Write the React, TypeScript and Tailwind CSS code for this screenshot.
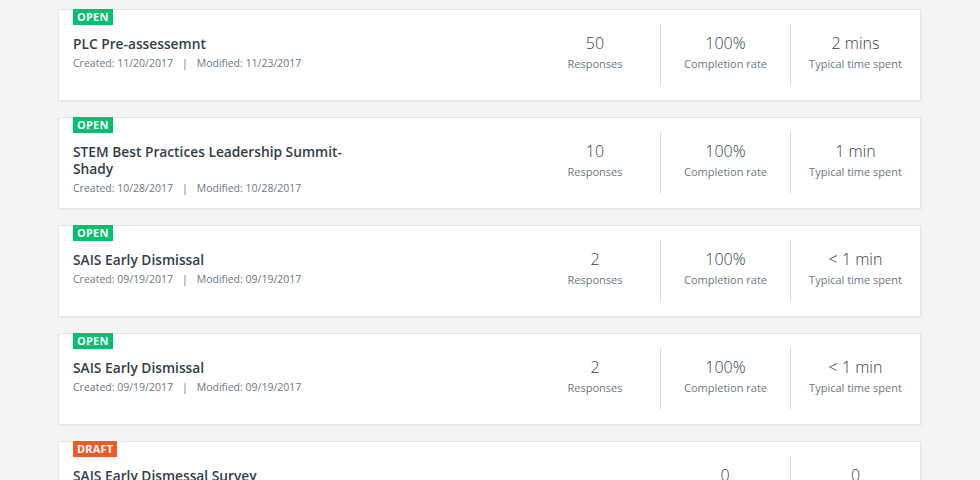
import React from "react";

type Stat = { value: string; label: string } | null;
type Survey = {
  status: "OPEN" | "DRAFT";
  title: string;
  created: string;
  modified: string;
  stats: Stat[];
};

const surveys: Survey[] = [
  {
    status: "OPEN",
    title: "PLC Pre-assessemnt",
    created: "11/20/2017",
    modified: "11/23/2017",
    stats: [
      { value: "50", label: "Responses" },
      { value: "100%", label: "Completion rate" },
      { value: "2 mins", label: "Typical time spent" },
    ],
  },
  {
    status: "OPEN",
    title: "STEM Best Practices Leadership Summit-Shady",
    created: "10/28/2017",
    modified: "10/28/2017",
    stats: [
      { value: "10", label: "Responses" },
      { value: "100%", label: "Completion rate" },
      { value: "1 min", label: "Typical time spent" },
    ],
  },
  {
    status: "OPEN",
    title: "SAIS Early Dismissal",
    created: "09/19/2017",
    modified: "09/19/2017",
    stats: [
      { value: "2", label: "Responses" },
      { value: "100%", label: "Completion rate" },
      { value: "< 1 min", label: "Typical time spent" },
    ],
  },
  {
    status: "OPEN",
    title: "SAIS Early Dismissal",
    created: "09/19/2017",
    modified: "09/19/2017",
    stats: [
      { value: "2", label: "Responses" },
      { value: "100%", label: "Completion rate" },
      { value: "< 1 min", label: "Typical time spent" },
    ],
  },
  {
    status: "DRAFT",
    title: "SAIS Early Dismessal Survey",
    created: "11/20/2017",
    modified: "11/20/2017",
    stats: [
      null,
      { value: "0", label: "Responses" },
      { value: "0", label: "Questions" },
    ],
  },
];

function Card({ s }: { s: Survey }) {
  return (
    <div className="flex h-[92px] shrink-0 border border-[#e6e6e6] bg-white shadow-[1px_1px_2px_rgba(0,0,0,0.04)]">
      <div className="flex min-w-0 flex-1 flex-col pl-[14px]">
        <div className="flex">
          <span
            className={
              s.status === "OPEN"
                ? "-mt-px h-[16px] px-[4px] text-[11px] leading-[16px] font-bold tracking-[0.2px] text-white bg-[#00bf6f]"
                : "-mt-px h-[16px] px-[4px] text-[11px] leading-[16px] font-bold tracking-[0.2px] text-white bg-[#ef5b24]"
            }
          >
            {s.status}
          </span>
        </div>
        <div className="mt-[10px] max-w-[290px] text-[13.75px] leading-[17px] font-semibold text-[#333e48]">
          {s.title}
        </div>
        <div className="mt-[3px] text-[10.5px] leading-[16px] text-[#6b787f]">
          Created: {s.created}
          <span className="mx-[9px]">|</span>
          Modified: {s.modified}
        </div>
      </div>
      <div className="flex">
        {s.stats.map((st, i) => (
          <div
            key={i}
            className={
              i === 0 || st === null || s.stats[i - 1] === null
                ? "mt-[14px] flex h-[61px] w-[130px] flex-col items-center"
                : "mt-[14px] flex h-[61px] w-[130px] flex-col items-center border-l border-[#d9d9d9]"
            }
          >
            {st && (
              <>
                <div className="pt-[9px] text-[16px] leading-[20px] font-light text-[#333e48]">
                  {st.value}
                </div>
                <div className="mt-[3px] text-[11px] leading-[16px] text-[#6b787f]">
                  {st.label}
                </div>
              </>
            )}
          </div>
        ))}
      </div>
    </div>
  );
}

export default function App() {
  return (
    <div
      className="h-[480px] w-[980px] overflow-hidden bg-[#f4f4f4]"
      style={{ fontFamily: "'Open Sans', 'Noto Sans', sans-serif" }}
    >
      <div className="ml-[58px] flex w-[863px] flex-col gap-[16px] pt-[9px]">
        {surveys.map((s, i) => (
          <Card key={i} s={s} />
        ))}
      </div>
    </div>
  );
}
